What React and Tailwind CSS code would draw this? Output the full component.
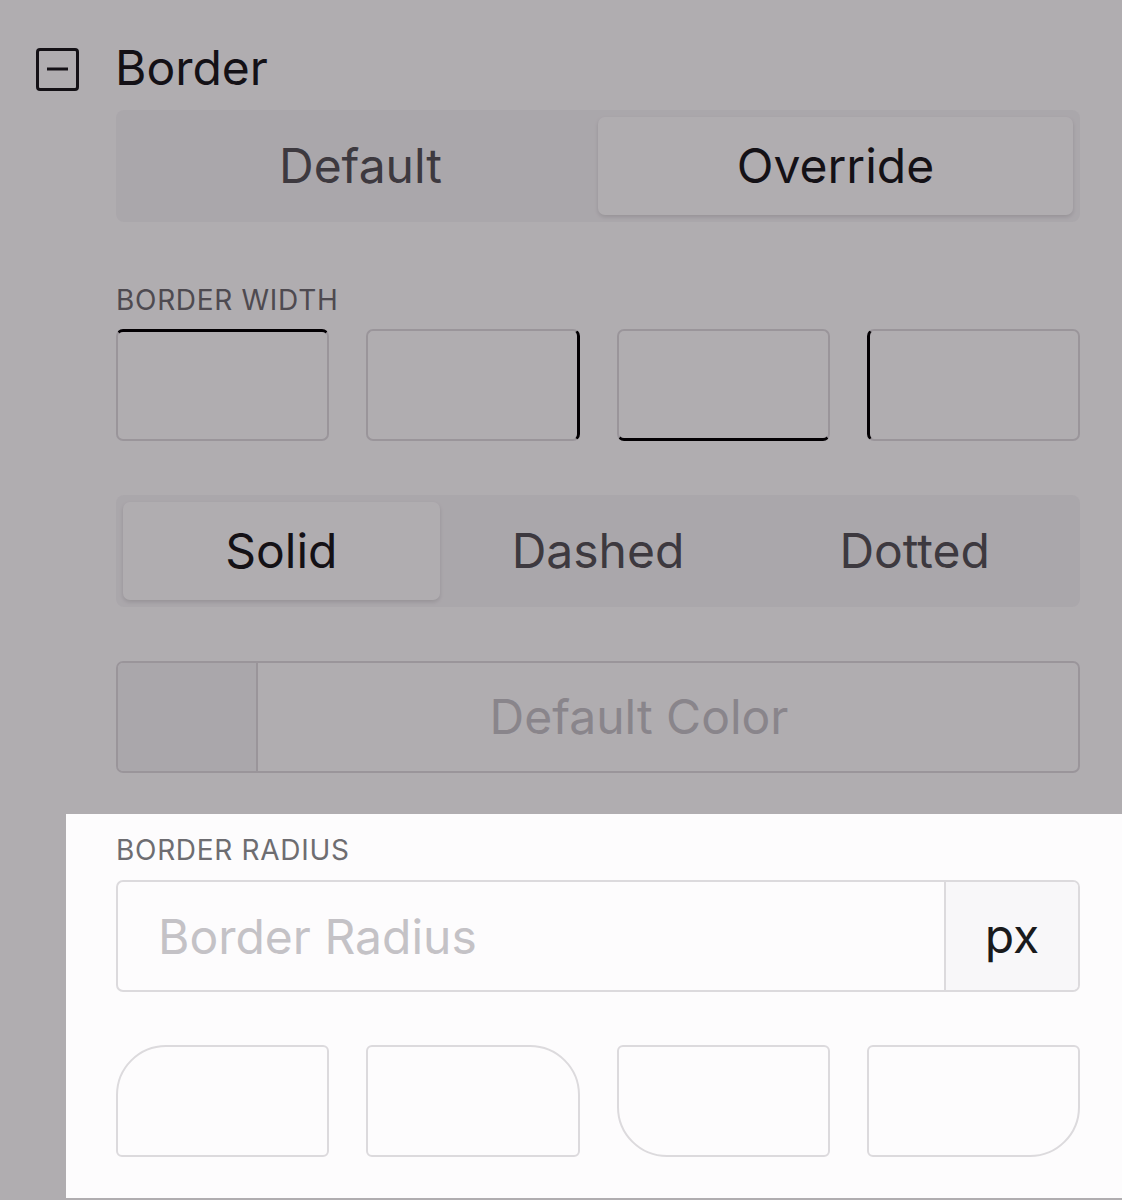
import React, { useState } from "react";

// collapse toggle next to the section title
const MinusSquare = () => (
  <svg width="43" height="43" viewBox="0 0 43 43" fill="none" className="shrink-0">
    <rect x="1.5" y="1.5" width="40" height="40" rx="2.5" stroke="#1a1a1c" strokeWidth="3" />
    <line x1="11" y1="21" x2="32" y2="21" stroke="#1a1a1c" strokeWidth="3" />
  </svg>
);

const Segmented = ({ options, value, onChange }) => (
  <div
    className="grid h-[112px] gap-0 rounded-[8px] bg-[#f4f3f5] p-[7px]"
    style={{ gridTemplateColumns: `repeat(${options.length}, minmax(0, 1fr))` }}
  >
    {options.map((opt) => (
      <button
        key={opt}
        type="button"
        onClick={() => onChange(opt)}
        className={
          value === opt
            ? "rounded-[7px] bg-[#fdfcfd] text-[48px] leading-none text-[#1a1a1c] shadow-[0_2px_4px_rgba(0,0,0,0.12)]"
            : "rounded-[7px] text-[48px] leading-none text-[#555458]"
        }
      >
        {opt}
      </button>
    ))}
  </div>
);

const Label = ({ children }) => (
  <div className="text-[28px] leading-none tracking-[0.7px] text-[#6e6d71] uppercase">{children}</div>
);

const widthSides = [
  "border-t-[3px] border-t-black",
  "border-r-[3px] border-r-black",
  "border-b-[3px] border-b-black",
  "border-l-[3px] border-l-black",
];

const radiusCorners = [
  "rounded-tl-[50px]",
  "rounded-tr-[50px]",
  "rounded-bl-[50px]",
  "rounded-br-[50px]",
];

export default function App() {
  const [mode, setMode] = useState("Override");
  const [style, setStyle] = useState("Solid");

  return (
    <div className="relative min-h-[1200px] w-full overflow-hidden bg-[#fdfcfd] font-[family-name:Inter,sans-serif]">
      <div className="mt-[48px] ml-[36px] flex h-[43px] items-center gap-[36px]">
        <MinusSquare />
        <span className="-mt-[4px] text-[48px] leading-none text-[#1a1a1c]">Border</span>
      </div>

      <div className="ml-[116px] w-[964px]">
        <div className="mt-[19px]">
          <Segmented options={["Default", "Override"]} value={mode} onChange={setMode} />
        </div>

        <div className="mt-[64px]">
          <Label>Border width</Label>
          <div className="mt-[15px] grid grid-cols-4 gap-[37px]">
            {widthSides.map((side, i) => (
              <div key={i} className={`h-[112px] rounded-[7px] border-2 border-[#dcdadd] ${side}`} />
            ))}
          </div>
        </div>

        <div className="mt-[54px]">
          <Segmented options={["Solid", "Dashed", "Dotted"]} value={style} onChange={setStyle} />
        </div>

        <div className="mt-[54px] flex h-[112px] overflow-hidden rounded-[7px] border-2 border-[#dcdadd]">
          <div className="w-[140px] shrink-0 border-r-2 border-[#dcdadd] bg-[#f4f3f5]" />
          <div className="flex flex-1 items-center justify-center pr-[58px] text-[48px] leading-none text-[#c4c2c6]">
            Default Color
          </div>
        </div>
      </div>

      {/* highlighted section for the tour step */}
      <div className="relative z-10 mt-[41px] ml-[66px] h-[384px] bg-[#fdfcfd] pt-[22px] pl-[50px] shadow-[0_0_0_2000px_rgba(8,0,10,0.315)]">
        <div className="w-[964px]">
          <Label>Border radius</Label>
          <div className="mt-[16px] flex h-[112px] overflow-hidden rounded-[7px] border-2 border-[#dcdadd]">
            <input
              placeholder="Border Radius"
              className="min-w-0 flex-1 bg-transparent pl-[40px] text-[48px] leading-none text-[#1a1a1c] outline-none placeholder:text-[#c4c2c6]"
            />
            <div className="flex w-[134px] shrink-0 items-center justify-center border-l-2 border-[#dcdadd] bg-[#f8f7f9] text-[48px] leading-none text-[#1a1a1c]">
              px
            </div>
          </div>
          <div className="mt-[53px] grid grid-cols-4 gap-[37px]">
            {radiusCorners.map((corner, i) => (
              <div key={i} className={`h-[112px] rounded-[6px] border-2 border-[#dcdadd] ${corner}`} />
            ))}
          </div>
        </div>
      </div>
    </div>
  );
}
